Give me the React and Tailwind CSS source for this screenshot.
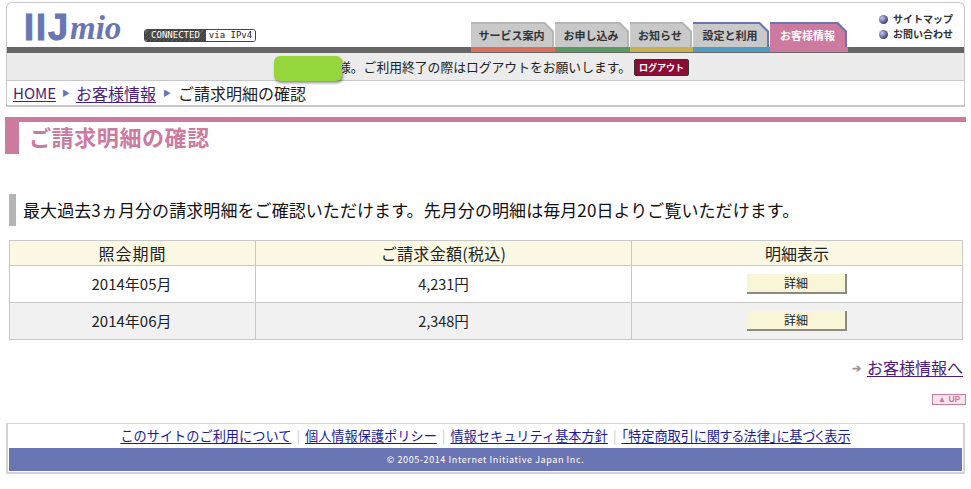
import React from 'react';

const jp = "font-['Noto_Sans_CJK_JP','Liberation_Sans',sans-serif]";

const tabs = [
  { label: 'サービス案内', w: 'w-[84px]', bar: 'bg-[#d9705c]', bg: 'bg-[#c9c9c9]', edge: 'bg-[#b5b5b5]', text: 'text-[#333]' },
  { label: 'お申し込み', w: 'w-[75px]', bar: 'bg-[#5c9a63]', bg: 'bg-[#c9c9c9]', edge: 'bg-[#b5b5b5]', text: 'text-[#333]' },
  { label: 'お知らせ', w: 'w-[63px]', bar: 'bg-[#c9b04e]', bg: 'bg-[#c9c9c9]', edge: 'bg-[#b5b5b5]', text: 'text-[#333]' },
  { label: '設定と利用', w: 'w-[77px]', bar: 'bg-[#4f9cc4]', bg: 'bg-[#c9c9c9]', edge: 'bg-[#6a75b3]', text: 'text-[#333]' },
  { label: 'お客様情報', w: 'w-[78px]', bar: 'bg-[#cd7a9f]', bg: 'bg-[#cd7a9f]', edge: 'bg-[#6a75b3]', text: 'text-white' },
];

const Tab = ({ tab }) => (
  <div className={`${tab.w} flex flex-col`}>
    <div className={`${tab.edge} h-[25px] mr-[1px] pt-[2px] pr-[2px] [clip-path:polygon(0_0,calc(100%-9px)_0,100%_9px,100%_100%,0_100%)]`}>
      <div className={`${tab.bg} h-full flex items-center justify-center text-[11px] font-bold ${tab.text} [clip-path:polygon(0_0,calc(100%-8px)_0,100%_8px,100%_100%,0_100%)]`}>
        {tab.label}
      </div>
    </div>
    <div className={`${tab.bar} h-[5px]`}></div>
  </div>
);

const Button = () => (
  <button className="w-[100px] h-[20px] bg-[#f9f5d7] border-r-2 border-b-2 border-[#8a8a80] text-[12px] text-[#222] leading-none">詳細</button>
);

const Link = ({ children, className = '' }) => (
  <a className={`underline underline-offset-2 decoration-1 ${className}`}>{children}</a>
);

const Row = ({ month, amount, className = '' }) => (
  <div className={`grid grid-cols-[245px_376px_1fr] h-[37px] border-t border-[#c8c8c8] ${className}`}>
    <div className="flex items-center justify-center pr-[2px]">{month}</div>
    <div className="flex items-center justify-center border-l border-[#c8c8c8] text-[14.5px]">{amount}</div>
    <div className="flex items-center justify-center border-l border-[#c8c8c8]"><Button /></div>
  </div>
);

const Dot = () => (
  <span className="size-[9px] rounded-full bg-[radial-gradient(circle_at_35%_35%,#c5c8ea,#3f4478_70%)]"></span>
);

export default function App() {
  return (
    <div className={`${jp} w-[971px] h-[489px] bg-white text-[#222] overflow-hidden pt-[2px] text-[15px]`}>
      <div className="mx-[6px] border-x border-b-2 border-t border-[#c8c8c8] rounded-t-[6px] h-[105px] relative">
        <div className="flex h-[44px] relative">
          <div className="flex items-start w-[464px] pl-[17px] pt-[5px]">
            <div className="w-[97px] flex items-start">
              <div className="text-[36px] leading-[40px] font-bold text-[#6a75b3] font-['Liberation_Sans',sans-serif] tracking-[2px] [-webkit-text-stroke:1px_#6a75b3]">IIJ</div>
              <div className="text-[33px] leading-[38px] mt-[1px] italic text-[#6a75b3] font-['Liberation_Serif',serif] font-bold">mio</div>
            </div>
            <div className="ml-[23px] mt-[21px] flex w-[112px] h-[13px] items-stretch text-[9px] leading-[11px] font-['DejaVu_Sans_Mono',monospace] border border-[#444] rounded-[3px] overflow-hidden">
              <div className="bg-[repeating-linear-gradient(135deg,#444_0,#444_2px,#5c5c5c_2px,#5c5c5c_3px)] text-white w-[61px] flex items-center justify-center">CONNECTED</div>
              <div className="bg-white text-[#222] flex-1 flex items-center justify-center">via IPv4</div>
            </div>
          </div>
          <div className="flex mt-[19px] h-[30px] w-[377px]">
            {tabs.map((tab) => <Tab key={tab.label} tab={tab} />)}
          </div>
          <div className="flex flex-col gap-[1px] pt-[9px] pl-[31px] text-[10px] leading-[14px] font-bold text-[#333]">
            <div className="flex items-center gap-[5px]"><Dot />サイトマップ</div>
            <div className="flex items-center gap-[5px]"><Dot />お問い合わせ</div>
          </div>
        </div>
        <div className="h-[6px] bg-[#666]"></div>
        <div className="h-[28px] bg-[#ececec] border-b border-[#c8c8c8] flex items-center pl-[331px] text-[12.8px] relative">
          <span>様。ご利用終了の際はログアウトをお願いします。</span>
          <span className="ml-[3px] mt-[2px] w-[55px] h-[17px] rounded-[2px] border border-[#333] bg-[#8e0b36] text-white text-[9px] font-bold flex items-center justify-center">ログアウト</span>
          <div className="absolute left-[267px] top-[3px] w-[68px] h-[25px] rounded-[6px] bg-[#94d63c] shadow-[1px_2px_3px_rgba(0,0,0,0.45)]"></div>
        </div>
        <div className="h-[24px] flex items-center pl-[6px] text-[16px] text-[#222]">
          <Link className="text-[#4b1d80] text-[15px]">HOME</Link>
          <span className="mx-[6px] text-[8px] text-[#6a75b3]">▶</span>
          <Link className="text-[#4b1d80]">お客様情報</Link>
          <span className="mx-[7px] text-[8px] text-[#6a75b3]">▶</span>
          <span>ご請求明細の確認</span>
        </div>
      </div>

      <div className="mt-[10px] ml-[5px] mr-[5px] border-t-[5px] border-[#cd7a9f] h-[37px] flex">
        <div className="w-[14px] bg-[#cd7a9f]"></div>
        <div className="pl-[10px] text-[22px] leading-[28px] font-bold tracking-[0.6px] text-[#cd7a9f]">ご請求明細の確認</div>
      </div>

      <div className="mt-[40px] ml-[9px] flex items-center h-[32px] border-l-[7px] border-[#b5b5b5] pl-[7px] text-[17px] tracking-[0.08px] text-[#111]">
        最大過去3ヵ月分の請求明細をご確認いただけます。先月分の明細は毎月20日よりご覧いただけます。
      </div>

      <div className="mt-[14px] mx-[9px] w-[954px] border-x border-b border-t border-[#c8c8c8] text-[15px]">
        <div className="grid grid-cols-[245px_376px_1fr] h-[24px] bg-[#fbf8e4] text-[16px]">
          <div className="flex items-center justify-center tracking-[1px]">照会期間</div>
          <div className="flex items-center justify-center border-l border-[#c8c8c8] tracking-[0.3px]">ご請求金額(税込)</div>
          <div className="flex items-center justify-center border-l border-[#c8c8c8]">明細表示</div>
        </div>
        <Row month="2014年05月" amount="4,231円" />
        <Row month="2014年06月" amount="2,348円" className="bg-[#f2f1f2]" />
      </div>

      <div className="mt-[15px] mr-[8px] flex justify-end items-center gap-[6px] text-[16px]">
        <span className="text-[#999] text-[11px] font-bold">➔</span>
        <Link className="text-[#4b1d80]">お客様情報へ</Link>
      </div>

      <div className="mt-[15px] mr-[5px] flex justify-end">
        <div className="w-[34px] h-[11px] border border-[#cd7a9f] bg-[#f7e6ee] text-[#cd7a9f] text-[8.5px] leading-[9px] font-bold text-center whitespace-nowrap overflow-hidden font-['Liberation_Sans',sans-serif]">▲ UP</div>
      </div>

      <div className="mt-[18px] mx-[6px] h-[51px] border-2 border-[#d4d4d4] border-t px-[1px]">
        <div className="h-[24px] flex items-center justify-center text-[13.2px] text-[#1a1a9c] gap-[5px]">
          <Link>このサイトのご利用について</Link>
          <span className="text-[#ccc]">|</span>
          <Link>個人情報保護ポリシー</Link>
          <span className="text-[#ccc]">|</span>
          <Link>情報セキュリティ基本方針</Link>
          <span className="text-[#ccc]">|</span>
          <Link className="[font-feature-settings:'palt']">「特定商取引に関する法律」に基づく表示</Link>
        </div>
        <div className="h-[23px] bg-[#6a75b3] text-white text-[9px] tracking-[0.6px] flex items-center justify-center">© 2005-2014 Internet Initiative Japan Inc.</div>
      </div>
    </div>
  );
}
